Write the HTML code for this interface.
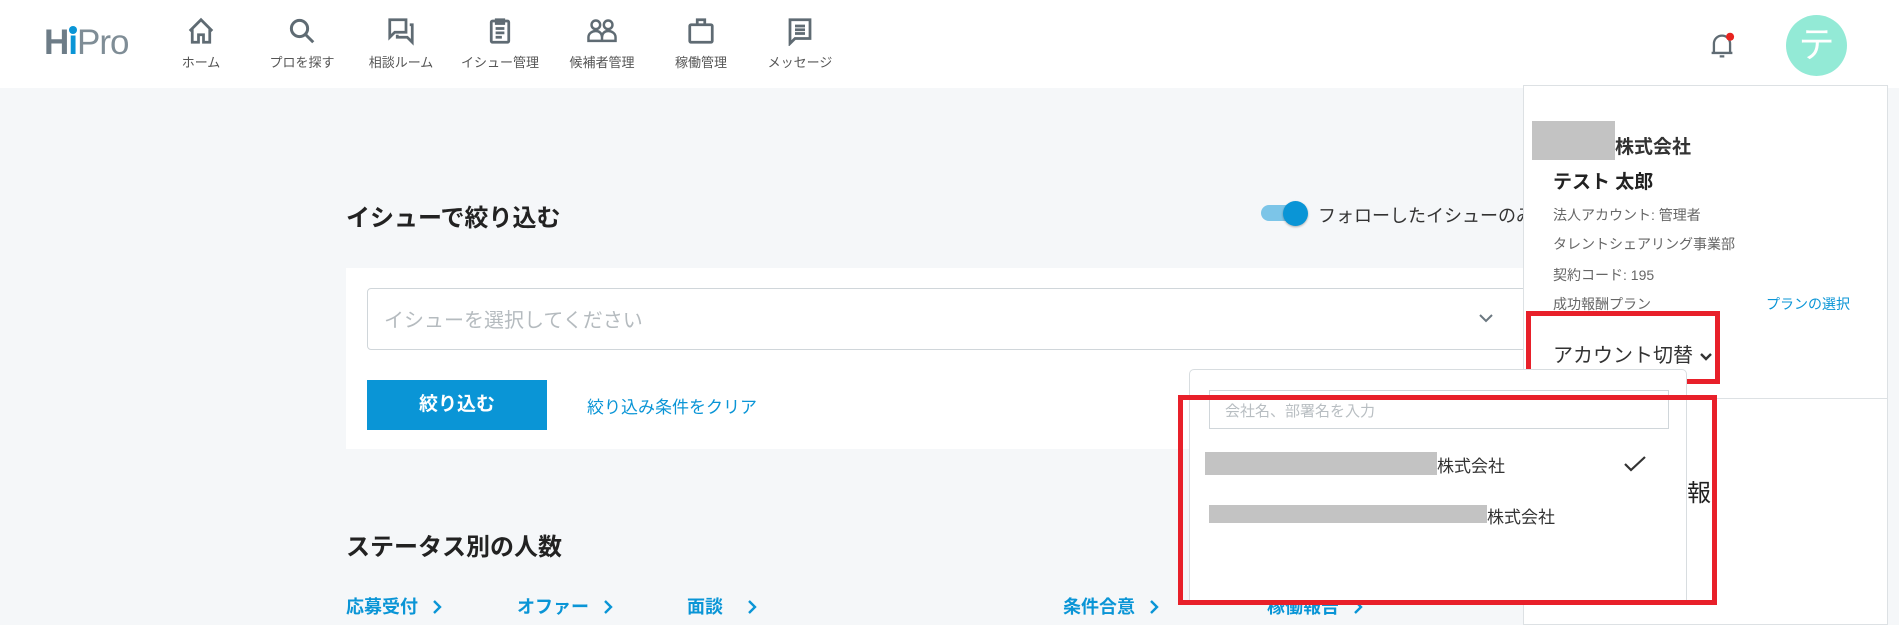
<!DOCTYPE html>
<html><head><meta charset="utf-8"><style>
*{margin:0;padding:0;box-sizing:border-box}
body{width:1899px;height:621px;overflow:hidden;background:#f5f7f9;font-family:"Liberation Sans","Noto Sans CJK JP",sans-serif;color:#222;position:relative}
.abs{position:absolute}
header{position:absolute;left:0;top:0;width:1899px;height:88px;background:#fff}
.nav{position:absolute;top:16px;width:100px;text-align:center;font-size:13px;color:#555}
.nav svg{display:block;margin:0 auto 6px}
.gray{background:#c3c3c3}
.blue{color:#0a95d6}
.st{position:absolute;top:593px;font-size:18px;font-weight:bold;color:#0a95d6;white-space:nowrap}
.st svg{vertical-align:middle;margin-left:14px;margin-top:-3px}
</style></head><body>
<header>
 <div class="abs" style="left:44px;top:26px;font-size:35px;line-height:34px;letter-spacing:-1px">
  <span style="font-weight:bold;color:#6d7c87">H</span><span style="position:relative;font-weight:bold;color:#0a95d6">ı<span style="position:absolute;left:1px;top:3px;width:8px;height:8px;border-radius:50%;background:#0a95d6"></span></span><span style="color:#7f8d96">Pro</span></div>
 <div class="nav" style="left:151px"><svg width="30" height="30" viewBox="0 0 24 24" fill="none" stroke="#5f6b73" stroke-width="2.2"><path d="M3 12L12 3l9 9M5 10v11h5v-6h4v6h5V10"/></svg>ホーム</div>
 <div class="nav" style="left:252px"><svg width="30" height="30" viewBox="0 0 24 24" fill="none" stroke="#5f6b73" stroke-width="2.4"><circle cx="10" cy="10" r="6.5"/><path d="M15 15l6 6"/></svg>プロを探す</div>
 <div class="nav" style="left:351px"><svg width="30" height="30" viewBox="0 0 24 24" fill="none" stroke="#5f6b73" stroke-width="2.2"><path d="M3 3h13v10H7l-4 4z"/><path d="M19 7h2v14l-4-4H9v-2"/></svg>相談ルーム</div>
 <div class="nav" style="left:450px"><svg width="30" height="30" viewBox="0 0 24 24" fill="none" stroke="#5f6b73" stroke-width="2.2"><rect x="5" y="4" width="14" height="17" rx="1"/><path d="M9 3h6v3H9zM8.5 10h7M8.5 13.5h7M8.5 17h5"/></svg>イシュー管理</div>
 <div class="nav" style="left:552px"><svg width="32" height="30" viewBox="0 0 26 24" fill="none" stroke="#5f6b73" stroke-width="2"><circle cx="8" cy="7" r="3.5"/><circle cx="18" cy="7" r="3.5"/><path d="M2 20v-3c0-3 3-5 6-5s5 2 5 5v3zM13 20v-3c0-3 2-5 5-5s6 2 6 5v3z"/></svg>候補者管理</div>
 <div class="nav" style="left:651px"><svg width="30" height="30" viewBox="0 0 24 24" fill="none" stroke="#5f6b73" stroke-width="2.2"><rect x="3" y="7" width="18" height="14" rx="1"/><path d="M9 7V3h6v4"/></svg>稼働管理</div>
 <div class="nav" style="left:750px"><svg width="30" height="30" viewBox="0 0 24 24" fill="none" stroke="#5f6b73" stroke-width="2.2"><path d="M4 3h16v15H8l-4 4z"/><path d="M8 8h8M8 11h8M8 14h8"/></svg>メッセージ</div>
 <svg class="abs" style="left:1708px;top:31px" width="28" height="30" viewBox="0 0 24 26" fill="none" stroke="#5f6b73" stroke-width="2"><path d="M5 19V11a7 7 0 0 1 14 0v8H3h18M10 22h4"/><circle cx="19" cy="5" r="3.5" fill="#e8231f" stroke="none"/></svg>
 <div class="abs" style="left:1786px;top:15px;width:61px;height:61px;border-radius:50%;background:#93ead6;color:#fff;font-size:36px;text-align:center;line-height:60px">テ</div>
</header>

<div class="abs" style="left:346px;top:198px;font-size:24px;font-weight:bold">イシューで絞り込む</div>
<div class="abs" style="left:1261px;top:205px;width:40px;height:16px;border-radius:8px;background:#7cc5e8"></div>
<div class="abs" style="left:1283px;top:201px;width:25px;height:25px;border-radius:50%;background:#0a95d6;box-shadow:0 1px 2px rgba(0,0,0,.3)"></div>
<div class="abs" style="left:1318px;top:202px;font-size:18px;color:#333;white-space:nowrap">フォローしたイシューのみ表示</div>

<div class="abs" style="left:346px;top:268px;width:1200px;height:181px;background:#fff"></div>
<div class="abs" style="left:367px;top:288px;width:1180px;height:62px;border:1px solid #d0d6da;border-radius:4px;background:#fff"></div>
<div class="abs" style="left:384px;top:304px;font-size:20px;color:#b5bbbf">イシューを選択してください</div>
<svg class="abs" style="left:1478px;top:312px" width="16" height="12" viewBox="0 0 16 12" fill="none" stroke="#6b7780" stroke-width="2"><path d="M2 3l6 6 6-6"/></svg>
<div class="abs" style="left:367px;top:380px;width:180px;height:50px;background:#0a95d6;color:#fff;font-weight:bold;font-size:19px;text-align:center;line-height:50px">絞り込む</div>
<div class="abs blue" style="left:587px;top:393px;font-size:17px">絞り込み条件をクリア</div>

<div class="abs" style="left:346px;top:527px;font-size:24px;font-weight:bold">ステータス別の人数</div>
<div class="st" style="left:346px">応募受付<svg width="10" height="16" viewBox="0 0 10 16" fill="none" stroke="#0a95d6" stroke-width="2.4"><path d="M2 2l6 6-6 6"/></svg></div>
<div class="st" style="left:517px">オファー<svg width="10" height="16" viewBox="0 0 10 16" fill="none" stroke="#0a95d6" stroke-width="2.4"><path d="M2 2l6 6-6 6"/></svg></div>
<div class="st" style="left:687px">面談<svg style="margin-left:24px" width="10" height="16" viewBox="0 0 10 16" fill="none" stroke="#0a95d6" stroke-width="2.4"><path d="M2 2l6 6-6 6"/></svg></div>
<div class="st" style="left:1063px">条件合意<svg width="10" height="16" viewBox="0 0 10 16" fill="none" stroke="#0a95d6" stroke-width="2.4"><path d="M2 2l6 6-6 6"/></svg></div>
<div class="st" style="left:1267px">稼働報告<svg width="10" height="16" viewBox="0 0 10 16" fill="none" stroke="#0a95d6" stroke-width="2.4"><path d="M2 2l6 6-6 6"/></svg></div>

<!-- profile panel -->
<div class="abs" style="left:1523px;top:85px;width:365px;height:540px;background:#fff;border:1px solid #dde1e4"></div>
<div class="abs" style="left:1687px;top:398px;width:200px;height:1px;background:#dde1e4"></div>
<div class="abs gray" style="left:1532px;top:121px;width:83px;height:39px"></div>
<div class="abs" style="left:1615px;top:132px;font-size:19px;font-weight:bold;color:#333">株式会社</div>
<div class="abs" style="left:1553px;top:167px;font-size:19px;font-weight:bold;color:#222">テスト 太郎</div>
<div class="abs" style="left:1553px;top:205px;font-size:14px;color:#666">法人アカウント: 管理者</div>
<div class="abs" style="left:1553px;top:234px;font-size:14px;color:#666">タレントシェアリング事業部</div>
<div class="abs" style="left:1553px;top:265px;font-size:14px;color:#666">契約コード: 195</div>
<div class="abs" style="left:1553px;top:294px;font-size:14px;color:#666">成功報酬プラン</div>
<div class="abs blue" style="left:1766px;top:294px;font-size:14px">プランの選択</div>
<div class="abs" style="left:1553px;top:339px;font-size:20px;color:#333;white-space:nowrap">アカウント切替 <svg width="14" height="10" viewBox="0 0 14 10" fill="none" stroke="#333" stroke-width="2.4"><path d="M2 2l5 5 5-5"/></svg></div>
<div class="abs" style="left:1526px;top:311px;width:194px;height:73px;border:5px solid #e8202a"></div>

<div class="abs" style="left:1687px;top:473px;font-size:24px;color:#222">報</div>

<!-- dropdown -->
<div class="abs" style="left:1189px;top:369px;width:498px;height:236px;background:#fff;border:1px solid #d8dde0;border-radius:5px"></div>
<div class="abs" style="left:1209px;top:390px;width:460px;height:39px;border:1px solid #d0d6da"></div>
<div class="abs" style="left:1225px;top:400px;font-size:15px;color:#b8bec2">会社名、部署名を入力</div>
<div class="abs gray" style="left:1205px;top:452px;width:232px;height:23px"></div>
<div class="abs" style="left:1437px;top:452px;font-size:17px;color:#333">株式会社</div>
<svg class="abs" style="left:1623px;top:455px" width="24" height="18" viewBox="0 0 24 18" fill="none" stroke="#333" stroke-width="2.2"><path d="M2 9l6 6L22 2"/></svg>
<div class="abs gray" style="left:1209px;top:505px;width:278px;height:18px"></div>
<div class="abs" style="left:1487px;top:503px;font-size:17px;color:#333">株式会社</div>
<div class="abs" style="left:1178px;top:395px;width:539px;height:210px;border:5px solid #e8202a"></div>
</body></html>
